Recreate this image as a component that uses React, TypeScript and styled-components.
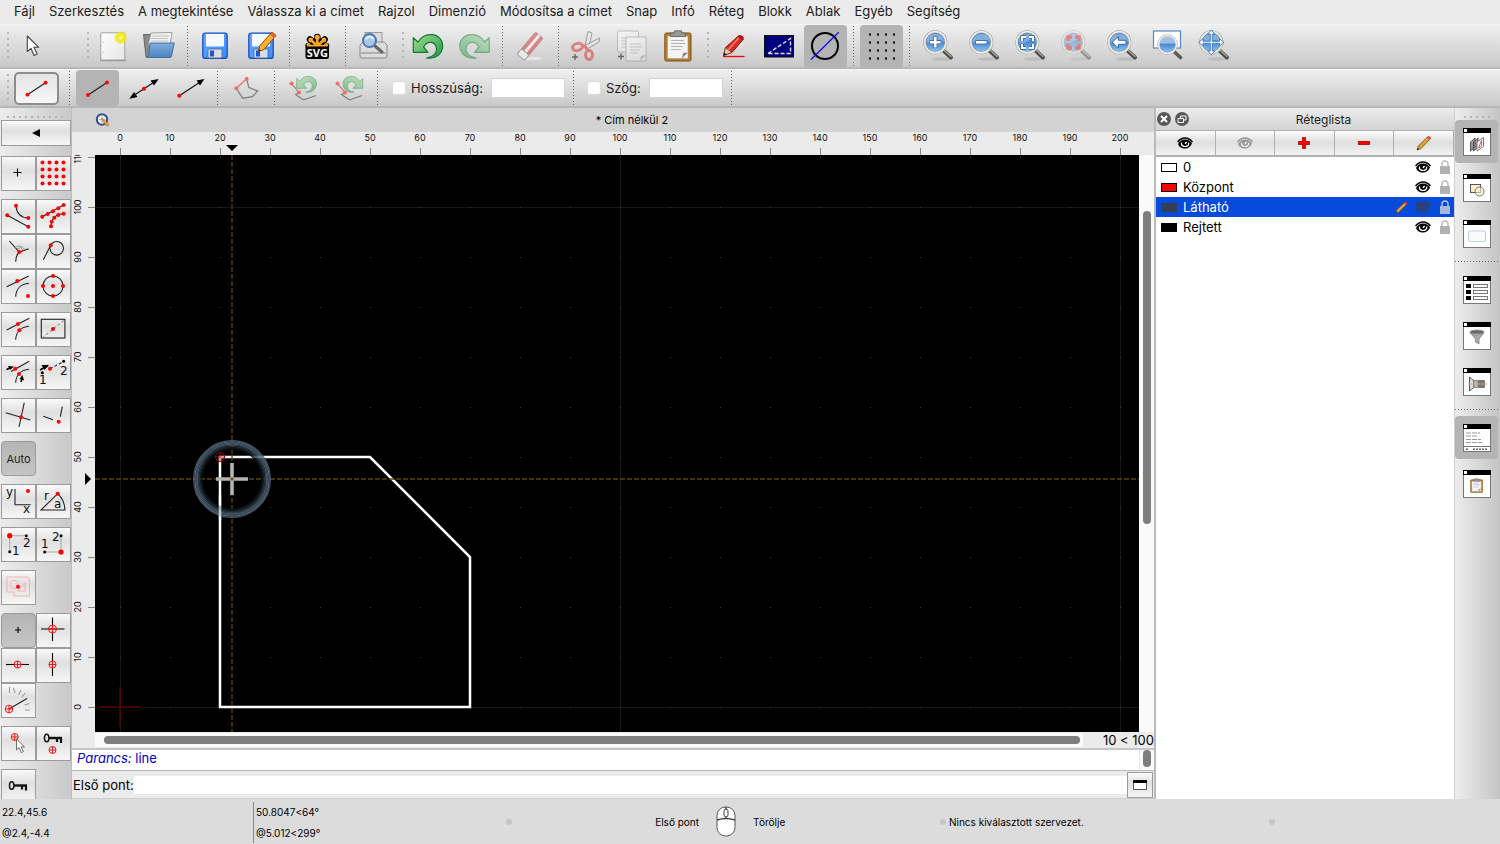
import React from 'react';
import styled, { createGlobalStyle, css } from 'styled-components';

const GlobalStyle = createGlobalStyle`
  * { box-sizing: border-box; }
  body { margin: 0; background: #ebebeb; font-family: Inter, "Liberation Sans", sans-serif; color: #1c1c1c; }
  button, input { font: inherit; color: inherit; }
  button { padding: 0; border: 0; background: none; display: flex; align-items: center; justify-content: center; }
  svg { display: block; }
`;

/* ---------- shell ---------- */

const Shell = styled.div`
  display: flex;
  flex-direction: column;
  height: 100vh;
  overflow: hidden;
`;

const MenuBar = styled.nav`
  display: flex;
  flex: none;
  height: 24px;
  padding-left: 7px;
  background: #ebebeb;
`;

const MenuItem = styled.button`
  height: 22px;
  padding: 0 7px;
  font-size: 13px;
  white-space: nowrap;
`;

const ToolBar = styled.div<{ $height: number }>`
  display: flex;
  flex: none;
  align-items: center;
  gap: 3px;
  height: ${(p) => p.$height}px;
  padding-left: 3px;
  background: linear-gradient(#efefef, #c9c9c9);
  border-top: 1px solid #f5f5f5;
  border-bottom: 2px solid #b7b7b7;
  font-size: 13px;
`;

const Handle = styled.span<{ $before?: number }>`
  width: 6px;
  height: 28px;
  margin-left: ${(p) => p.$before ?? 0}px;
  background: repeating-linear-gradient(#b4b4b4 0 2px, transparent 2px 6px) right / 2px 100% no-repeat;
`;

const Divider = styled.span<{ $after?: number }>`
  align-self: stretch;
  width: 1px;
  margin: 1px ${(p) => p.$after ?? 3}px 1px 3px;
  background: repeating-linear-gradient(#6b6b6b 0 1px, transparent 1px 3px);
`;

const ToolButton = styled.button<{ $active?: boolean; $height?: number }>`
  width: 43px;
  height: ${(p) => p.$height ?? 43}px;
  border-radius: 4px;
  background: ${(p) => (p.$active ? '#b4b4b4' : 'transparent')};
`;

const CurrentTool = styled.button`
  width: 45px;
  height: 33px;
  margin: 0 4px 0 2px;
  border: 2px solid #8d8d8d;
  border-radius: 5px;
  background: linear-gradient(#e4e4e4, #f6f6f6);
`;

const Field = styled.div`
  display: flex;
  align-items: center;
  padding: 0 2px 0 7px;
`;

const Check = styled.input`
  appearance: none;
  width: 14px;
  height: 14px;
  margin: 0 5px 0 0;
  border: 1px solid #dcdcdc;
  border-radius: 3px;
  background: #fff;
`;

const FieldLabel = styled.label`
  margin-right: 8px;
  font-size: 13px;
  white-space: nowrap;
`;

const NumberBox = styled.input`
  width: 74px;
  height: 20px;
  padding: 0 4px;
  border: 1px solid #d4d4d4;
  border-radius: 0;
  background: #fff;
`;

const Workspace = styled.main`
  display: grid;
  flex: 1;
  grid-template-columns: 72px minmax(0, 1fr) 301px 45px;
  grid-template-rows: minmax(0, 1fr);
  min-height: 0;
`;

/* ---------- snap tools ---------- */

const SnapPanel = styled.aside`
  display: flex;
  flex-direction: column;
  gap: 8px;
  min-height: 0;
  padding: 8px 0 0 1px;
  overflow: hidden;
  background: linear-gradient(90deg, #ededed, #c9c9c9);
  border-right: 1px solid #bdbdbd;
`;

const DotRow = styled.span<{ $width: number }>`
  flex: none;
  align-self: center;
  width: ${(p) => p.$width}px;
  height: 2px;
  background: repeating-linear-gradient(90deg, #b4b4b4 0 2px, transparent 2px 6px);
`;

const raised = css`
  border: 1px solid #9b9b9b;
  background: linear-gradient(#fafafa, #e0e0e0 40%, #f6f6f6);
`;

const BackButton = styled.button`
  ${raised}
  flex: none;
  width: 70px;
  height: 26px;
  margin: -6px 0 2px;
`;

const SnapGroup = styled.div`
  display: grid;
  flex: none;
  grid-template-columns: 35px 35px;
  grid-auto-rows: 35px;
`;

const SnapButton = styled.button<{ $pressed?: boolean }>`
  ${raised}
  font-size: 11px;
  ${(p) => p.$pressed && css`
    border-radius: 4px;
    background: linear-gradient(#b4b4b4, #c6c6c6);
  `}
`;

/* ---------- document ---------- */

const Center = styled.section`
  display: flex;
  flex-direction: column;
  min-width: 0;
  min-height: 0;
`;

const DocTitle = styled.div`
  display: flex;
  flex: none;
  align-items: center;
  height: 24px;
  padding-left: 23px;
  background: #d3d3d3;
  font-size: 11px;
`;

const DocName = styled.span`
  flex: 1;
  text-align: center;
  color: #000;
`;

const DrawArea = styled.div`
  display: grid;
  flex: 1;
  grid-template-columns: 23px minmax(0, 1fr) 15px;
  grid-template-rows: 23px minmax(0, 1fr) 16px;
  min-height: 0;
  background: #ebebeb;
`;

const Ruler = styled.svg`
  width: 100%;
  height: 100%;
  font-size: 9px;
  fill: #111;
`;

const TopRuler = styled(Ruler)`
  grid-column: 1 / 4;
`;

const Canvas = styled.svg`
  width: 100%;
  height: 100%;
  background: #000;
`;

const VerticalScroll = styled.div`
  padding: 56px 4px 0;
  background: #fafafa;
`;

const Thumb = styled.div<{ $size: string }>`
  width: 8px;
  height: ${(p) => p.$size};
  border-radius: 4px;
  background: #7e7e7e;
`;

const ScrollRow = styled.div`
  display: flex;
  grid-column: 2 / 4;
  align-items: center;
  font-size: 13px;
  white-space: nowrap;
  color: #000;
`;

const HorizontalScroll = styled.div`
  flex: 1;
  height: 14px;
  margin-right: 20px;
  padding: 3px 3px 0 9px;
  background: #fafafa;
`;

const HorizontalThumb = styled.div`
  height: 8px;
  border-radius: 4px;
  background: #7e7e7e;
`;

const History = styled.div`
  display: flex;
  flex: none;
  justify-content: space-between;
  height: 23px;
  padding-left: 5px;
  border-top: 2px solid #c6c6c6;
  border-bottom: 1px solid #b9b9b9;
  background: #fff;
  color: #0000c0;
  font-size: 13px;
  line-height: 16px;
`;

const HistoryScroll = styled.div`
  width: 15px;
  padding: 0 3px;
  border-left: 1px solid #e6e6e6;
  background: #fafafa;
`;

const CommandLine = styled.div`
  display: flex;
  flex: none;
  align-items: center;
  height: 28px;
  padding: 0 1px;
  border-bottom: 1px solid #cfcfcf;
  background: #ebebeb;
  color: #000;
  font-size: 13px;
`;

const CommandInput = styled.input`
  flex: 1;
  min-width: 0;
  height: 18px;
  padding: 0 4px;
  border: 0;
  background: #fff;
`;

const CommandButton = styled.button`
  ${raised}
  width: 26px;
  height: 26px;
`;

/* ---------- layer list ---------- */

const LayerDock = styled.section`
  display: flex;
  flex-direction: column;
  min-height: 0;
  border-left: 2px solid #b9b9b9;
  border-right: 1px solid #cfcfcf;
  background: #fff;
`;

const DockTitle = styled.header`
  display: flex;
  flex: none;
  align-items: center;
  gap: 4px;
  height: 22px;
  padding-left: 1px;
  background: linear-gradient(#ececec, #d3d3d3);
`;

const DockName = styled.h2`
  flex: 1;
  margin: 0;
  font-size: 12px;
  font-weight: 400;
  text-align: center;
`;

const LayerActions = styled.div`
  display: grid;
  flex: none;
  grid-template-columns: repeat(5, 1fr);
  height: 27px;
  border-bottom: 1px solid #b0b0b0;
`;

const LayerAction = styled.button`
  border: 1px solid #b0b0b0;
  border-left-width: 0;
  background: linear-gradient(#fbfbfb, #dfdfdf 48%, #f2f2f2);
`;

const LayerTable = styled.table`
  width: 100%;
  border-collapse: collapse;
  font-size: 13px;
`;

const LayerRow = styled.tr<{ $selected?: boolean }>`
  height: 20px;
  background: ${(p) => (p.$selected ? '#084adb' : '#fff')};
  color: ${(p) => (p.$selected ? '#fff' : '#000')};
`;

const LayerCell = styled.td<{ $width?: number }>`
  width: ${(p) => (p.$width ? `${p.$width}px` : 'auto')};
  height: 20px;
  padding: 0;
  line-height: 20px;
`;

const Swatch = styled.span<{ $color: string; $edge: string }>`
  display: block;
  width: 16px;
  height: 9px;
  margin-left: 5px;
  border: 1px solid ${(p) => p.$edge};
  background: ${(p) => p.$color};
`;

/* ---------- right dock bar ---------- */

const DockBar = styled.aside`
  display: flex;
  flex-direction: column;
  align-items: center;
  gap: 3px;
  padding: 8px 2px 0 0;
  background: linear-gradient(90deg, #ededed, #c4c4c4);
`;

const DockButton = styled(ToolButton)`
  flex: none;
  &:first-of-type { margin-top: -1px; }
`;

const DockDivider = styled.span`
  flex: none;
  align-self: stretch;
  height: 1px;
  margin: 3px 0;
  background: repeating-linear-gradient(90deg, #6b6b6b 0 1px, transparent 1px 3px);
`;

/* ---------- status bar ---------- */

const StatusBar = styled.footer`
  display: grid;
  flex: none;
  grid-template-columns: 253px 253px minmax(0, 434px) minmax(0, 1fr);
  height: 45px;
  background: #dcdcdc;
  color: #000;
  font-size: 10px;
`;

const Coordinates = styled.div<{ $ruled?: boolean }>`
  display: flex;
  flex-direction: column;
  justify-content: space-between;
  margin: 3px 0 1px;
  padding: 4px 2px;
  line-height: 12px;
  border-left: ${(p) => (p.$ruled ? '1px solid #8a8a8a' : '0')};
`;

const StatusCell = styled.div`
  display: flex;
  align-items: center;
`;

const MouseHints = styled.div`
  display: grid;
  flex: 1;
  grid-template-columns: 184px 54px 1fr;
  align-items: center;
`;

const HintLeft = styled.span`
  text-align: right;
`;

const MouseCell = styled.span`
  display: flex;
  justify-content: center;
`;

const Bullet = styled.span`
  width: 6px;
  height: 6px;
  margin-right: 3px;
  border-radius: 3px;
  background: #c6c6c6;
`;

const Selection = styled.span`
  flex: 0 0 320px;
`;

/* ---------- icons ---------- */

const Big = ({ children, faded }: { children: React.ReactNode; faded?: boolean }) => (
  <svg width="43" height="43" viewBox="0 0 43 43" opacity={faded ? 0.5 : 1} aria-hidden="true">{children}</svg>
);

const Defs = () => (
  <svg width="0" height="0" aria-hidden="true">
    <defs>
      <linearGradient id="lens" x2="0" y2="1"><stop stopColor="#5a8cc8" /><stop offset=".5" stopColor="#4b8bd4" /><stop offset="1" stopColor="#92c8f8" /></linearGradient>
      <linearGradient id="green" x2="1" y2="1"><stop stopColor="#a5dc8c" /><stop offset="1" stopColor="#1e9a4a" /></linearGradient>
      <linearGradient id="folder" x2="0" y2="1"><stop stopColor="#7fb0de" /><stop offset="1" stopColor="#4a84c0" /></linearGradient>
      <linearGradient id="disk" x2="1" y2="1"><stop stopColor="#66aaff" /><stop offset="1" stopColor="#3a8cf8" /></linearGradient>
      <linearGradient id="paper" x2="1" y2="1"><stop stopColor="#fff" /><stop offset="1" stopColor="#e6e6e6" /></linearGradient>
      <radialGradient id="glow"><stop stopColor="#fffde0" /><stop offset=".35" stopColor="#f6ee20" /><stop offset=".7" stopColor="#f0e610" stopOpacity=".8" /><stop offset="1" stopColor="#f4ea40" stopOpacity="0" /></radialGradient>
    </defs>
  </svg>
);

const Cursor = ({ x = 0, y = 0, s = 1 }: { x?: number; y?: number; s?: number }) => (
  <path transform={`translate(${x} ${y}) scale(${s})`} d="M0 0V15.5L3.6 12.3L6.8 19.4L9.8 18L6.6 11.3H11.4Z" fill="#fff" stroke="#444" strokeWidth="1.1" strokeLinejoin="round" />
);

const DiskShape = () => (
  <>
    <rect x="8.8" y="8" width="24.4" height="25.4" rx="2.5" fill="url(#disk)" stroke="#1546b8" strokeWidth="1.2" />
    <path d="M12 9H30V20.5Q30 21.5 29 21.5H13Q12 21.5 12 20.5Z" fill="#f4f9ff" />
    <rect x="14" y="24" width="14" height="9" rx="1" fill="#d8dde4" stroke="#4464a8" strokeWidth=".8" />
    <rect x="16" y="25.5" width="4" height="6" fill="#2255c8" />
  </>
);

const Loupe = ({ children, faded }: { children?: React.ReactNode; faded?: boolean }) => (
  <Big faded={faded}>
    <ellipse cx="26" cy="34" rx="10" ry="1.8" fill="#999" opacity=".35" />
    <path d="M28 26L35 32.500" stroke="#4c4c48" strokeWidth="4" strokeLinecap="round" />
    <path d="M28 25L35 31.500" stroke="#a6a69e" strokeWidth="1.4" strokeLinecap="round" />
    <circle cx="19.3" cy="17.3" r="10.6" fill="url(#lens)" stroke="#9a9c94" strokeWidth="2.8" />
    <circle cx="19.3" cy="17.3" r="10.6" fill="none" stroke="#ecece6" strokeWidth="1.7" />
    <path d="M10.6 17Q11 9.2 19.3 9T28 17Q24 13.5 19 16.5T10.6 17Z" fill="#b6cfee" opacity=".5" />
    {children}
  </Big>
);

const Corners = ({ color }: { color: string }) => (
  <>
    <path d="M14 16V12H18M21 12H25V16M25 19V23H21M18 23H14V19" fill="none" stroke={color === '#fff' ? '#2f5f9a' : color} strokeWidth="3.4" />
    <path d="M14 16V12H18M21 12H25V16M25 19V23H21M18 23H14V19" fill="none" stroke={color} strokeWidth="2" />
  </>
);

const TurnArrow = () => (
  <path d="M6.3 12.7L11 17C18 5.500 35 8 35.700 20C36 29 28 34.500 19.500 33C27 32 31 27 29 21.500C27 16 20 16 16.500 22L21 27.300H6.300Z" fill="url(#green)" stroke="#127a35" strokeWidth="1.2" strokeLinejoin="round" />
);

const Board = () => (
  <>
    <rect x="7.8" y="8" width="26.2" height="28" rx="1.5" fill="#b87d2c" stroke="#7c5010" />
    <path d="M10.500 11H31V33.500H10.500Z" fill="#f4f4f4" stroke="#999" strokeWidth=".6" />
    <path d="M25 33.500L26 28L31 27.500Z" fill="#888" />
    <path d="M14 15.500H27M14 18.500H28M14 21.500H26M14 24.500H24" stroke="#b4b4b4" strokeWidth="1" />
    <path d="M13.500 11.500V8H17.500V5.800H24.500V8H28.500V11.500Z" fill="#9a9a94" stroke="#5a5a55" strokeWidth=".8" />
  </>
);

const Mark = ({ x, y }: { x: number; y: number }) => (
  <path d={`M${x - 3} ${y}H${x + 3}M${x} ${y - 3}V${y + 3}`} stroke="#000" strokeWidth="1.4" />
);

const Page = ({ x, y, w, h }: { x: number; y: number; w: number; h: number }) => (
  <g transform={`translate(${x} ${y})`}>
    <rect width={w} height={h} rx="1" fill="url(#paper)" stroke="#888" strokeWidth=".9" />
    <path d={`M4 7H${w - 5}M4 10H${w - 4}M4 13H${w - 6}M4 16H${w - 8}`} stroke="#aaa" />
    <path d={`M${w - 6} ${h}L${w - 5} ${h - 5}L${w} ${h - 6}Z`} fill="#999" />
  </g>
);

const icons: Record<string, React.ReactNode> = {
  cursor: <Big><Cursor x={15.3} y={11} /></Big>,
  fresh: <Big><path d="M8 35.500H34" stroke="#999" strokeWidth="1.500" /><rect x="8.800" y="7.800" width="24" height="27.200" rx="1" fill="url(#paper)" stroke="#a2a2a0" /><circle cx="11.500" cy="17.500" r=".8" fill="#ccc" /><circle cx="11.500" cy="27.500" r=".8" fill="#ccc" /><circle cx="28.700" cy="12.700" r="7" fill="url(#glow)" /></Big>,
  open: <Big>
    <path d="M5.500 9.500H14V12H32V32H8Z" fill="#8a8a88" stroke="#555" strokeWidth=".8" />
    <path d="M13 8L34 7.500L32 20H10Z" fill="#f2f2f2" stroke="#888" strokeWidth=".8" />
    <path d="M14 11H31M13 13.500H30M13 16H30" stroke="#c0c0c0" />
    <path d="M12 18H36.300L33.500 31Q33.300 32.500 31.500 32.500H8.500Q10.500 31.500 10.700 29Z" fill="url(#folder)" stroke="#3b6a9e" strokeWidth=".9" />
  </Big>,
  save: <Big><DiskShape /></Big>,
  saveAs: <Big><DiskShape /><path d="M32 7L36 10.500L24 24.500L18.500 26.500L19.500 21Z" fill="#f8b030" stroke="#8a4a10" /><path d="M32 7L36 10.500L34 13L30 9.500Z" fill="#e86030" /><path d="M18.500 26.500L19 24L20.800 25.600Z" fill="#222" /></Big>,
  svgExport: <Big>
    <g stroke="#000" strokeWidth="6.500" strokeLinecap="round"><path d="M21.300 21V12M21.300 21L14 14.500M21.300 21L28.600 14.500M21.300 21H12.500M21.300 21H30" /></g>
    <g stroke="#f9a72c" strokeWidth="2.600" strokeLinecap="round"><path d="M21.300 21V12.500M21.300 21L15 15M21.300 21L27.600 15M21.300 21H12.700M21.300 21H29.900" /></g>
    <g fill="#f9a72c"><circle cx="21.300" cy="12.300" r="2.500" /><circle cx="14.700" cy="15" r="2.400" /><circle cx="27.900" cy="15" r="2.400" /><circle cx="12.500" cy="20" r="2" /><circle cx="30.100" cy="20" r="2" /></g>
    <rect x="9.500" y="21.500" width="23.500" height="12.500" rx="2.500" />
    <text x="21.300" y="32" fontSize="11" fontWeight="700" fontFamily="Open Sans, sans-serif" textAnchor="middle" fill="#fff">SVG</text>
  </Big>,
  preview: <Big>
    <rect x="13" y="7.500" width="17" height="14" fill="#ddd" stroke="#999" />
    <path d="M8 20L11 17H32L35 20V31Q35 33 33 33H10Q8 33 8 31Z" fill="#dcdcda" stroke="#8a8a88" />
    <path d="M9 28H34" stroke="#b0b0ae" strokeWidth="2" />
    <path d="M23 21L30 27" stroke="#666" strokeWidth="3" strokeLinecap="round" />
    <circle cx="17.500" cy="15.500" r="6.500" fill="#a9c9ea" stroke="#4c79ae" strokeWidth="2" /><path d="M13.500 14Q17.500 9.500 21.500 14" fill="none" stroke="#e8f3ff" strokeWidth="2" />
  </Big>,
  undo: <Big><TurnArrow /></Big>,
  redo: <Big faded><g transform="translate(42.500 0) scale(-1 1)"><TurnArrow /></g></Big>,
  erase: <Big faded>
    <ellipse cx="22" cy="33.500" rx="11" ry="1.800" fill="#fff" opacity=".9" />
    <g transform="translate(21 20.500) rotate(-50)">
      <rect x="-15" y="-4.500" width="29" height="10" rx="1.500" fill="#d83030" stroke="#844" strokeWidth=".7" />
      <rect x="-8" y="-1" width="22" height="3" fill="#fff" />
      <rect x="-15" y="-4.500" width="7" height="10" rx="2" fill="#fff" stroke="#777" strokeWidth="1" />
    </g>
  </Big>,
  cut: <Big faded>
    <path d="M23 6.500L20 21L23.500 23L27 8Z" fill="#eee" stroke="#555" />
    <path d="M34.500 13L20 20.500L22 24L34 17Z" fill="#eee" stroke="#555" />
    <g fill="none" stroke="#e02828" strokeWidth="3"><ellipse cx="12.500" cy="22" rx="5" ry="3.500" transform="rotate(-15 12.500 22)" /><ellipse cx="24" cy="30" rx="3.500" ry="4.500" /><path d="M17 21Q21 20 22.500 26" /></g>
    <Mark x={10} y={32} />
  </Big>,
  copy: <Big faded><Page x={6.5} y={6} w={21} h={21} /><Page x={15} y={12} w={20} h={24} /><Mark x={10} y={31.5} /></Big>,
  paste: <Big><Board /></Big>,
  pen: <Big>
    <path d="M11 31.500H32.500" stroke="#f00" strokeWidth="1.300" />
    <path d="M27 10.500L31.500 14L20 27.500L11.500 30.500L13.500 22.500Z" fill="#dc2a20" stroke="#7a1008" strokeWidth=".9" />
    <path d="M13.500 22.500L19.800 27.500L11.500 30.500Z" fill="#e8c496" stroke="#543" strokeWidth=".7" /><path d="M11.500 30.500L12.200 27.500L14.500 29.400Z" fill="#111" />
    <path d="M27.500 12L16.500 24.500" stroke="#ff8070" strokeWidth="1.500" /><path d="M25.500 11.800L27.500 10Q31.500 10 31.800 13.500L30 15.500Z" fill="#b01c14" />
  </Big>,
  draft: <Big><rect x="6.500" y="10.500" width="29" height="21.500" fill="#00007e" stroke="#111" /><path d="M10 28.500L32.500 13.500V28.500Z" fill="none" stroke="#dde" strokeWidth="1.400" strokeDasharray="4 2" /></Big>,
  circle: <Big><circle cx="21" cy="21" r="13" fill="none" stroke="#000" strokeWidth="2" /><path d="M7 34.500L34.700 7.300" stroke="#1010f0" strokeWidth="1.300" /></Big>,
  grid: <Big>{[0, 1, 2, 3].map((r) => [0, 1, 2, 3].map((c) => <rect key={`${r}${c}`} x={9 + c * 8} y={8.5 + r * 8} width="2" height="2" />))}</Big>,
  zoomIn: <Loupe><path d="M19.300 11.500V23M13.500 17.300H25" stroke="#2f5f9a" strokeWidth="4" /><path d="M19.300 12V22.600M14 17.300H24.600" stroke="#fff" strokeWidth="2.600" /></Loupe>,
  zoomOut: <Loupe><path d="M13.300 17.300H25.300" stroke="#2f5f9a" strokeWidth="4" /><path d="M14 17.300H24.600" stroke="#fff" strokeWidth="2.600" /></Loupe>,
  zoomAuto: <Loupe><Corners color="#fff" /></Loupe>,
  zoomRed: <Loupe faded><Corners color="#e82020" /></Loupe>,
  zoomBack: <Loupe><path d="M12 17.300L18.500 11.500V15.300H26V19.300H18.500V23Z" fill="#fff" stroke="#2f5f9a" strokeWidth=".9" /></Loupe>,
  zoomWindow: <Big>
    <path d="M28.500 27L34.500 32.500" stroke="#5c5c58" strokeWidth="3.600" strokeLinecap="round" />
    <rect x="7.500" y="6" width="27" height="17" fill="#fff" stroke="#5a86c4" strokeWidth="1.200" />
    <circle cx="21.500" cy="19.500" r="9" fill="url(#lens)" stroke="#aaa" strokeWidth="2.600" /><circle cx="21.500" cy="19.500" r="9" fill="none" stroke="#eee" strokeWidth="1.500" /><path d="M14 18.500A7.500 7.500 0 0 1 29 18.500Z" fill="#c2d5ea" opacity=".7" />
  </Big>,
  zoomPan: <Loupe>
    <g fill="#fff" stroke="#3a76b8" strokeWidth=".9"><path d="M18.300 9H15.800L19.300 5L22.800 9H20.300V16.300H27.600V13.800L32 17.300L27.600 20.800V18.300H20.300V26H22.800L19.300 30L15.800 26H18.300V18.300H11V20.800L6.600 17.300L11 13.800V16.300H18.300Z" /></g>
  </Loupe>,
};

const Small = ({ children, faded }: { children: React.ReactNode; faded?: boolean }) => (
  <svg width="43" height="37" viewBox="0 0 43 37" opacity={faded ? 0.5 : 1} aria-hidden="true">{children}</svg>
);

const D = ({ x, y, r = 2 }: { x: number; y: number; r?: number }) => <circle cx={x} cy={y} r={r} fill="#f00" />;

const lineIcon = <><path d="M12 25L31 12.500" stroke="#222" strokeWidth="1.200" /><D x={12} y={25} /><D x={31} y={12.5} /></>;
const openPolyline = <path d="M9.500 13.500L17 22.500L13.500 24.500L21.500 30L34 25.500" fill="none" stroke="#222" strokeWidth="1.100" />;

const Snap = ({ children }: { children: React.ReactNode }) => (
  <svg width="33" height="33" viewBox="1 1 33 33" fill="none" stroke="#222" strokeWidth="1.100" aria-hidden="true">{children}</svg>
);

const S = ({ x, y, r = 2, dark }: { x: number; y: number; r?: number; dark?: boolean }) => (
  <circle cx={x} cy={y} r={r} fill={dark ? '#000' : '#f00'} stroke="none" />
);

const Label = ({ x, y, children }: { x: number; y: number; children: string }) => (
  <text x={x} y={y} fontSize="12" fontFamily="DejaVu Sans, sans-serif" fill="#111" stroke="none">{children}</text>
);

const Target = ({ x, y, r = 3.5 }: { x: number; y: number; r?: number }) => (
  <g stroke="#f01818" strokeWidth="1"><circle cx={x} cy={y} r={r} /><path d={`M${x - r} ${y}H${x + r}M${x} ${y - r}V${y + r}`} /></g>
);

const KeyShape = ({ y }: { y: number }) => (
  <g stroke="#111"><ellipse cx="10.700" cy={y} rx="2.200" ry="3.800" strokeWidth="1.500" /><path d={`M13 ${y}H26`} strokeWidth="2.400" /><path d={`M21 ${y}V${y + 4}M25 ${y}V${y + 5}`} strokeWidth="2.200" /></g>
);

const curve = 'M14.700 27.700C15 20 20 15 28 14.300';

type SnapItem = { label: string; art: React.ReactNode; pressed?: boolean };
const snapGroups: SnapItem[][] = [
  [
    { label: 'Szabad', art: <Snap><path d="M12.500 16.500H20.500M16.500 12.500V20.500" stroke="#000" /></Snap> },
    { label: 'Rács', art: <Snap>{[0, 1, 2, 3].map((r) => [0, 1, 2, 3].map((c) => <S key={`${r}${c}`} x={6.5 + c * 7} y={6.5 + r * 7} />))}</Snap> },
  ],
  [
    { label: 'Végpontok', art: <Snap><path d="M15 6.700C15.500 14 19 18.500 27.300 19M6.300 16.300L27.300 27.700" /><S x={15} y={6.7} /><S x={27.3} y={19} /><S x={6.3} y={16.3} /><S x={27.3} y={27.7} /></Snap> },
    { label: 'Entitáson', art: <Snap><path d="M6.300 17.700L27.700 6M15 27.300Q16 15 27.700 14.700" /><S x={6.3} y={17.7} /><S x={11.7} y={15} /><S x={17} y={12.3} /><S x={22.3} y={9.3} /><S x={27.7} y={6} /><S x={15} y={27.3} /><S x={15.7} y={22.7} /><S x={18.3} y={18.7} /><S x={22.3} y={16} /><S x={27.7} y={14.7} /></Snap> },
    { label: 'Merőleges', art: <Snap><path d="M8.300 7L18.300 18L27.700 14.700M18.300 18Q14.500 22 14.700 27.700" /><path d="M14 14.500C15 11 21 11 24 16M16 15L19.500 13.500L22 16" stroke="#888" strokeWidth=".9" /><S x={18.3} y={18} /></Snap> },
    { label: 'Érintő', art: <Snap><circle cx="20.700" cy="14.300" r="6.800" /><path d="M7.300 25.700L14.700 11.300" /><S x={14.7} y={11.3} /></Snap> },
    { label: 'Referencia', art: <Snap><path d="M5.700 17.700L27.700 7" /><path d={curve} /><S x={16.3} y={12} /><S x={27} y={27} /></Snap> },
    { label: 'Középpont', art: <Snap><circle cx="17" cy="17" r="10" /><S x={17} y={17} /><S x={17} y={7} /><S x={17} y={27} /><S x={7} y={17} /><S x={27} y={17} /></Snap> },
  ],
  [
    { label: 'Felezőpont', art: <Snap><path d="M5.700 18L28.300 6.300" /><path d={curve} /><S x={17} y={12} /><S x={18.3} y={18.3} /></Snap> },
    { label: 'Entitás közepe', art: <Snap><rect x="5.300" y="7.300" width="23.600" height="18.700" /><path d="M6 26L29 7.500" stroke="#999" strokeDasharray="3 2" /><S x={17} y={17} /></Snap> },
  ],
  [
    { label: 'Távolság', art: <Snap><path d="M10 16.500L28.300 6.300" /><path d={curve} /><path d="M5.500 14.500L10 12.500M20 27L21 23" stroke="#000" strokeWidth="1.600" /><path d="M7 11L13 11.500L9 15ZM18.500 24L21.500 20L23 25.500Z" fill="#000" stroke="none" /><S x={14.3} y={13.7} /><S x={18} y={19} /></Snap> },
    { label: 'Két távolság', art: <Snap><path d="M14 13.700L27.700 6.500" strokeDasharray="3 2" /><path d="M4 15L12 10.500" stroke="#000" strokeWidth="1.600" /><path d="M5.500 10L13 10L8.500 15Z" fill="#000" stroke="none" /><S x={6.3} y={17.7} r={1.5} dark /><S x={27.7} y={6.3} r={1.5} dark /><S x={14} y={13.7} /><Label x={3} y={29}>1</Label><Label x={24} y={20}>2</Label></Snap> },
  ],
  [
    { label: 'Metszéspont', art: <Snap><path d="M4.700 14.700L29.300 22M23.300 4.700L18 29" /><S x={20} y={19.3} /></Snap> },
    { label: 'Kézi metszéspont', art: <Snap><path d="M7.300 18.300L17 21.700M26.300 8.700L24.300 18.700" /><S x={22.7} y={23.7} /></Snap> },
  ],
  [{ label: 'Auto', art: 'Auto', pressed: true }],
  [
    { label: 'Derékszögű koordináta', art: <Snap><path d="M14 5V20.700H29.700" /><S x={27} y={7} /><Label x={5} y={12}>y</Label><Label x={22} y={29}>x</Label></Snap> },
    { label: 'Poláris koordináta', art: <Snap><path d="M5 26L21.700 9.700Q28.500 16 29 26Z" /><S x={21.7} y={9.7} /><Label x={8} y={16}>r</Label><Label x={18} y={24}>a</Label></Snap> },
  ],
  [
    { label: 'X/Y pont', art: <Snap><path d="M25.300 8.700H8.700V24.700" stroke="#aaa" /><S x={8.7} y={8.7} r={2.6} /><S x={25.3} y={8.7} r={1.5} dark /><S x={8.7} y={24.7} r={1.5} dark /><Label x={11} y={28}>1</Label><Label x={22} y={20}>2</Label></Snap> },
    { label: 'Y/X pont', art: <Snap><path d="M8.700 25H25V8.700" stroke="#aaa" /><S x={25} y={25} r={2.6} /><S x={25} y={8.7} r={1.5} dark /><S x={8.7} y={25} r={1.5} dark /><Label x={5} y={21}>1</Label><Label x={16} y={14}>2</Label></Snap> },
  ],
  [{ label: 'Kijelölés középpontja', art: <Snap><g stroke="#f5b4b4"><path d="M6 7H26Q28.500 8 28.500 11V26H13V22H6Z" /><circle cx="13" cy="14.500" r="4" /><path d="M17 21H24V13Z" /></g><S x={17} y={16.7} /></Snap> }],
  [
    { label: 'Nincs korlátozás', pressed: true, art: <Snap><path d="M14 17H20M17 14V20" stroke="#000" /></Snap> },
    { label: 'Merőleges korlát', art: <Snap><path d="M5 16H28.500M16.500 4.500V28" stroke="#000" /><Target x={16.5} y={16} r={4} /></Snap> },
    { label: 'Vízszintes korlát', art: <Snap><path d="M5 16.500H28" stroke="#000" /><Target x={16.5} y={16.5} /></Snap> },
    { label: 'Függőleges korlát', art: <Snap><path d="M16.500 5V28" stroke="#000" /><Target x={16.5} y={16.5} /></Snap> },
    { label: 'Szögkorlát', art: <Snap><path d="M8 26L26 15.500" /><path d="M8.500 4V10M14 10L12.500 5M17.500 12L20 7M21 14L24 10M23.500 22L28.500 20.500M24 27H29" stroke="#999" /><Target x={8} y={26} r={3.8} /></Snap> },
  ],
  [
    { label: 'Relatív nullpont', art: <Snap><Target x={13.7} y={11} r={3.5} /><Cursor x={15.5} y={13} s={0.7} /></Snap> },
    { label: 'Relatív nullpont zárolása', art: <Snap><KeyShape y={12} /><Target x={16.5} y={24} /></Snap> },
  ],
  [{ label: 'Zárolás', art: <Snap><KeyShape y={16.5} /></Snap> }],
];

const Eye = ({ color = '#000', hole = '#fff' }: { color?: string; hole?: string }) => (
  <svg width="16" height="13" viewBox="0 0 16 13" aria-hidden="true">
    <path d="M1 7C3 3.500 5 2.500 8 2.500S13.500 4 15 6.500C13.500 10 11 11.500 8 11.500S2.500 10.500 1 7Z" fill={color} />
    <path d="M.5 5Q4 1 8 1T15.500 5" fill="none" stroke={color} strokeWidth="1.500" />
    <path d="M4.500 5.500Q4 9.500 8 9.500T11.800 5.500" fill="none" stroke={hole} strokeWidth="1.200" /><path d="M8 6.800L9.600 5" stroke={hole} strokeWidth="1.400" />
  </svg>
);

const Lock = ({ light }: { light?: boolean }) => (
  <svg width="10" height="14" viewBox="0 0 10 14" aria-hidden="true">
    <path d="M2 7V4Q2 1 5 1T8 4V7" fill="none" stroke={light ? '#b9c4de' : '#bdbdbd'} strokeWidth="1.400" /><rect y="6" width="10" height="8" fill={light ? '#a9b9dc' : '#b2b2b2'} />
  </svg>
);

const Pencil = ({ size }: { size: number }) => (
  <svg width={size} height={size} viewBox="0 0 16 16" aria-hidden="true">
    <path d="M1 15L2.200 11L11.500 2L14 4.200L5 13.500Z" fill="#dba13c" stroke="#7a5410" strokeWidth=".8" /><path d="M11 2.500L12.500 1Q14.800 1.200 15 3.500L13.500 5Z" fill="#e84038" /><path d="M1 15L1.700 12.800L3.200 14.300Z" fill="#222" />
  </svg>
);

const Win = ({ children }: { children: React.ReactNode }) => (
  <svg width="28" height="28" viewBox="0 0 28 28" aria-hidden="true">
    <rect x=".5" y=".5" width="27" height="27" fill="#fff" stroke="#777" /><path d="M0 0H28V5H0Z" fill="#000" /><rect x="1" y="1" width="3" height="3" fill="#fff" />{children}
  </svg>
);

const Funnel = () => <><ellipse cx="14" cy="10" rx="7" ry="2" fill="#666" stroke="#999" /><path d="M7 10.500Q10 13 14 13T21 10.500L16 17V22L12.500 20V17Z" fill="#aaa" stroke="#777" strokeWidth=".7" /></>;

const docks: (null | { label: string; active?: boolean; art: React.ReactNode })[] = [
  { label: 'Réteglista', active: true, art: <><path d="M7.500 14L12 10V19L7.500 23ZM10.500 14L15 10V19L10.500 23Z" fill="#999" stroke="#555" /><path d="M14 14L20.500 9.500V18.500L14 23Z" fill="#fff" stroke="#777" /><path d="M15.500 20L18.500 12.500V18Z" fill="none" stroke="#e33" strokeWidth=".8" /></> },
  { label: 'Blokklista', art: <><rect x="7.500" y="10.500" width="10" height="8" fill="#fbf0cc" stroke="#555" /><circle cx="16.500" cy="17.500" r="4.500" fill="#fbf0cc" fillOpacity=".6" stroke="#777" /></> },
  { label: 'Nézetlista', art: <rect x="5.500" y="11" width="17" height="10.500" rx="1.500" fill="#fafafa" stroke="#c3cfe6" strokeWidth="1.200" /> },
  null,
  { label: 'Tulajdonságok', art: <>{[8, 14, 20].map((y) => <React.Fragment key={y}><rect x="3" y={y} width="5" height="4" /><rect x="10.500" y={y + 0.5} width="14" height="3" fill="#fff" stroke="#777" /></React.Fragment>)}</> },
  { label: 'Szűrő', art: <Funnel /> },
  { label: 'Könyvtár', art: <><path d="M6.500 9V23L11 19V13Z" fill="#ddd" stroke="#555" /><rect x="11" y="12.500" width="4" height="7" fill="#bbb" stroke="#777" strokeWidth=".7" /><rect x="15" y="12" width="7" height="8" rx="1" fill="#777" /><path d="M5 16H24" stroke="#e99" strokeWidth=".8" /></> },
  null,
  { label: 'Parancssor', active: true, art: <><path d="M3 9H17M3 12H14M3 15.500H18M3 18.500H19" stroke="#999" strokeWidth="1.200" strokeDasharray="5 1" /><path d="M1 22.500H27" stroke="#777" /><path d="M3 25.300H5M10 25.300H25" stroke="#666" strokeWidth="1.600" strokeDasharray="2 1" /></> },
  { label: 'Vágólap', art: <g transform="translate(4 6) scale(.46)"><Board /></g> },
];

/* ---------- data ---------- */

const menus = ['Fájl', 'Szerkesztés', 'A megtekintése', 'Válassza ki a címet', 'Rajzol', 'Dimenzió', 'Módosítsa a címet', 'Snap', 'Infó', 'Réteg', 'Blokk', 'Ablak', 'Egyéb', 'Segítség'];

type Tool = '|' | ':' | { id: string; label: string; active?: boolean };
const tools: Tool[] = [
  { id: 'fresh', label: 'Új' }, { id: 'open', label: 'Megnyitás' }, '|',
  { id: 'save', label: 'Mentés' }, { id: 'saveAs', label: 'Mentés másként' }, '|',
  { id: 'svgExport', label: 'SVG exportálás' }, '|', { id: 'preview', label: 'Nyomtatási kép' }, ':',
  { id: 'undo', label: 'Visszavonás' }, { id: 'redo', label: 'Ismét' }, '|',
  { id: 'erase', label: 'Törlés' }, '|',
  { id: 'cut', label: 'Kivágás' }, { id: 'copy', label: 'Másolás' }, { id: 'paste', label: 'Beillesztés' }, ':',
  { id: 'pen', label: 'Toll' }, { id: 'draft', label: 'Vázlat' }, { id: 'circle', label: 'Élsimítás', active: true }, '|',
  { id: 'grid', label: 'Rács megjelenítése', active: true }, '|',
  { id: 'zoomIn', label: 'Nagyítás' }, { id: 'zoomOut', label: 'Kicsinyítés' }, { id: 'zoomAuto', label: 'Automatikus nagyítás' }, { id: 'zoomRed', label: 'Kijelölés nagyítása' }, { id: 'zoomBack', label: 'Előző nézet' }, { id: 'zoomWindow', label: 'Ablak nagyítása' }, { id: 'zoomPan', label: 'Mozgatás' },
];

const layers = [
  { name: '0', color: '#fff', edge: '#000' },
  { name: 'Központ', color: '#f00', edge: '#000' },
  { name: 'Látható', color: '#333f52', edge: '#333f52', selected: true },
  { name: 'Rejtett', color: '#000', edge: '#000' },
];

const STEP = 50;
const range = (from: number, to: number) => Array.from({ length: to - from + 1 }, (_, i) => from + i);

const halo = [
  { r: 38.4, color: '#4a5b6c' }, { r: 37.2, color: '#5c7084' }, { r: 36, color: '#45576a' },
  { r: 34.8, color: '#506377' }, { r: 33.6, color: '#334250' }, { r: 32.4, color: '#2a3641' },
  { r: 31.2, color: '#161d24' }, { r: 30, color: '#0e1317' },
];

function Drawing() {
  return (
    <Canvas role="img" aria-label="Rajz">
      <defs>
        <pattern id="dots" width={STEP} height={STEP} patternUnits="userSpaceOnUse" x="25" y="2"><rect width="1" height="1" fill="#3c3c3c" /></pattern>
        <pattern id="major" width={STEP * 10} height={STEP * 10} patternUnits="userSpaceOnUse" x="25" y="52"><path d="M.5 0V500M0 .5H500" stroke="#181818" /></pattern>
      </defs>
      <rect width="100%" height="100%" fill="url(#major)" />
      <rect width="100%" height="100%" fill="url(#dots)" />
      <path d="M5 552H45M25 532V572" stroke="#5a0000" strokeWidth="1.500" />
      <path d="M125 302H275L375 402V552H125Z" fill="none" stroke="#fff" strokeWidth="2.500" />
      <g stroke="#57430a" strokeWidth="1.300" strokeDasharray="5 2"><line x1="0" x2="100%" y1="324" y2="324" /><line x1="137" x2="137" y1="0" y2="100%" /></g>
      <g fill="none" stroke="#b00000"><circle cx="125" cy="302" r="4.500" /><path d="M120 302H130M125 297V307" strokeWidth=".8" /></g>
      <g fill="none" opacity=".9">
        {halo.map((ring) => <circle key={ring.r} cx="137" cy="324" r={ring.r} stroke={ring.color} strokeWidth="1.300" />)}
      </g>
      <path d="M125 340V365" stroke="#fff" strokeWidth="2.500" opacity=".6" />
      <path d="M121 324H153M137 308V340" stroke="#b4b4b4" strokeWidth="3.600" /><rect x="135.500" y="322.500" width="3" height="3" fill="#6b5a20" />
    </Canvas>
  );
}

export default function App() {
  return (
    <Shell>
      <GlobalStyle />
      <MenuBar>{menus.map((m) => <MenuItem key={m}>{m}</MenuItem>)}</MenuBar>

      <ToolBar $height={45}>
        <Handle />
        <ToolButton aria-label="Kijelölés">{icons.cursor}</ToolButton>
        <Handle $before={25} />
        {tools.map((t, i) => {
          if (t === '|') return <Divider key={i} />;
          if (t === ':') return <Handle key={i} />;
          return <ToolButton key={i} aria-label={t.label} $active={t.active}>{icons[t.id]}</ToolButton>;
        })}
      </ToolBar>

      <ToolBar $height={39}>
        <Handle />
        <CurrentTool aria-label="Aktuális eszköz"><Small>{lineIcon}</Small></CurrentTool>
        <Divider />
        <ToolButton $height={36} $active aria-label="Szakasz"><Small>{lineIcon}</Small></ToolButton>
        <ToolButton $height={36} aria-label="Egyenes"><Small><path d="M11 26L33 11.500" stroke="#111" strokeWidth="1.200" /><path d="M7.300 28.700L12 22L15.500 27ZM36.700 9L32 15.500L28.500 10.500Z" /><D x={22} y={18.7} /></Small></ToolButton>
        <ToolButton $height={36} aria-label="Félegyenes"><Small><path d="M11.300 25.700L33 11.500" stroke="#111" strokeWidth="1.200" /><path d="M36.500 9L32 15.500L28.500 10.500Z" /><D x={11.3} y={25.7} /></Small></ToolButton>
        <Divider $after={4} />
        <ToolButton $height={36} aria-label="Sokszög lezárása"><Small faded><path d="M11.300 18.300L17.700 28.300L27.300 26.700L32.700 21L23.700 17.300L21.700 8.700" fill="none" stroke="#222" strokeWidth="1.200" /><path d="M11.300 18.300L21.700 8.700" stroke="#f00" strokeWidth="1.400" /><D x={11.3} y={18.3} /><D x={21.7} y={8.7} /></Small></ToolButton>
        <Divider $after={4} />
        <ToolButton $height={36} aria-label="Pont visszavonása"><Small faded>{openPolyline}<path d="M9.500 13.500L17 22.500" stroke="#f00" /><D x={9.5} y={13.5} /><D x={17} y={22.5} /><g transform="translate(10.500 0) scale(.67)"><TurnArrow /></g></Small></ToolButton>
        <ToolButton $height={36} aria-label="Pont ismétlése"><Small faded>{openPolyline}<path d="M9.500 13.500L17 22.500" stroke="#f00" /><D x={9.5} y={13.5} /><D x={17} y={22.5} /><g transform="translate(39 0) scale(-.67 .67)"><TurnArrow /></g></Small></ToolButton>
        <Divider $after={4} />
        <Field>
          <Check type="checkbox" id="length-on" />
          <FieldLabel htmlFor="length-on">Hosszúság:</FieldLabel>
          <NumberBox aria-label="Hosszúság" />
        </Field>
        <Divider />
        <Field>
          <Check type="checkbox" id="angle-on" />
          <FieldLabel htmlFor="angle-on">Szög:</FieldLabel>
          <NumberBox aria-label="Szög" />
        </Field>
        <Divider />
      </ToolBar>

      <Workspace>
        <SnapPanel>
          <DotRow $width={58} />
          <BackButton aria-label="Vissza"><svg width="8" height="8" aria-hidden="true"><path d="M0 4L8 0V8Z" /></svg></BackButton>
          {snapGroups.map((group, i) => (
            <SnapGroup key={i}>
              {group.map((s) => <SnapButton key={s.label} $pressed={s.pressed} aria-label={s.label}>{s.art}</SnapButton>)}
            </SnapGroup>
          ))}
        </SnapPanel>

        <Center>
          <DocTitle>
            <svg width="15" height="15" viewBox="0 0 15 15" aria-hidden="true"><circle cx="7" cy="6.500" r="5.200" fill="#f3f4f8" stroke="#334f94" strokeWidth="2" /><path d="M7 3V10M3.500 6.500H10.500" stroke="#bbb" /><path d="M6.500 5.500L8 5.500L14 11.500L12.500 13.500L7 7.500Z" fill="#f0a030" stroke="#a87838" strokeWidth=".7" /></svg>
            <DocName>* Cím nélkül 2</DocName>
          </DocTitle>
          <DrawArea>
            <TopRuler aria-hidden="true">
              {range(0, 20).map((n) => (
                <g key={n}><rect x={48 + n * STEP} y="16" width="1" height="7" fill="#888" /><text x={48 + n * STEP} y="9" textAnchor="middle">{n * 10}</text></g>
              ))}
              <path d="M154 13H166L160 19Z" fill="#000" />
            </TopRuler>
            <Ruler aria-hidden="true">
              {range(0, 11).map((n) => (
                <g key={n}><rect x="16" y={552 - n * STEP} width="7" height="1" fill="#888" /><text transform={`translate(9 ${552 - n * STEP}) rotate(-90)`} textAnchor="middle">{n * 10}</text></g>
              ))}
              <path d="M13 318V330L19 324Z" fill="#000" />
            </Ruler>
            <Drawing />
            <VerticalScroll><Thumb $size="60%" /></VerticalScroll>
            <span />
            <ScrollRow><HorizontalScroll><HorizontalThumb /></HorizontalScroll>10 &lt; 100</ScrollRow>
          </DrawArea>
          <History>
            <span><em>Parancs:</em> line</span>
            <HistoryScroll><Thumb $size="17px" /></HistoryScroll>
          </History>
          <CommandLine>
            <label htmlFor="command">Első pont:</label>
            <CommandInput id="command" />
            <CommandButton aria-label="Parancsablak"><svg width="14" height="10" aria-hidden="true"><rect x=".5" y=".5" width="13" height="9" fill="#fff" stroke="#555" /><path d="M0 0H14V3H0Z" /></svg></CommandButton>
          </CommandLine>
        </Center>

        <LayerDock>
          <DockTitle>
            <svg width="14" height="14" aria-hidden="true"><circle cx="7" cy="7" r="7" fill="#585858" /><path d="M4 4L10 10M10 4L4 10" stroke="#fff" strokeWidth="2" /></svg>
            <svg width="14" height="14" aria-hidden="true"><circle cx="7" cy="7" r="7" fill="#585858" /><path d="M5.500 6V4H11V8H9M3 6.500H8.500V10.500H3Z" fill="none" stroke="#fff" /></svg>
            <DockName>Réteglista</DockName>
          </DockTitle>
          <LayerActions>
            <LayerAction aria-label="Mind látható"><Eye /></LayerAction>
            <LayerAction aria-label="Mind rejtett"><Eye color="#999" hole="#eee" /></LayerAction>
            <LayerAction aria-label="Réteg hozzáadása"><svg width="12" height="12" aria-hidden="true"><path d="M4.500 .5H7.500V4.500H11.500V7.500H7.500V11.500H4.500V7.500H.5V4.500H4.500Z" fill="#f00" stroke="#a00" strokeWidth=".8" /></svg></LayerAction>
            <LayerAction aria-label="Réteg törlése"><svg width="12" height="4" aria-hidden="true"><rect x=".5" y=".5" width="11" height="3" fill="#f00" stroke="#a00" strokeWidth=".8" /></svg></LayerAction>
            <LayerAction aria-label="Réteg szerkesztése"><Pencil size={16} /></LayerAction>
          </LayerActions>
          <LayerTable>
            <tbody>
              {layers.map((l) => (
                <LayerRow key={l.name} $selected={l.selected}>
                  <LayerCell $width={27}><Swatch $color={l.color} $edge={l.edge} /></LayerCell>
                  <LayerCell>{l.name}</LayerCell>
                  <LayerCell $width={20}>{l.selected && <Pencil size={13} />}</LayerCell>
                  <LayerCell $width={25}><Eye color={l.selected ? '#34415c' : '#000'} hole={l.selected ? '#084adb' : '#fff'} /></LayerCell>
                  <LayerCell $width={14}><Lock light={l.selected} /></LayerCell>
                </LayerRow>
              ))}
            </tbody>
          </LayerTable>
        </LayerDock>

        <DockBar>
          <DotRow $width={26} />
          {docks.map((d, i) => (d
            ? <DockButton key={i} $active={d.active} aria-label={d.label}><Win>{d.art}</Win></DockButton>
            : <DockDivider key={i} />))}
        </DockBar>
      </Workspace>

      <StatusBar>
        <Coordinates><span>22.4,45.6</span><span>@2.4,-4.4</span></Coordinates>
        <Coordinates $ruled><span>50.8047&lt;64°</span><span>@5.012&lt;299°</span></Coordinates>
        <StatusCell>
          <Bullet />
          <MouseHints>
            <HintLeft>Első pont</HintLeft>
            <MouseCell><svg width="20" height="32" aria-hidden="true"><rect x="1" y="1" width="18" height="29" rx="8.500" fill="#fff" stroke="#555" /><path d="M1 14Q10 11 19 14M10 1V12" fill="none" stroke="#444" strokeWidth="1.500" /><rect x="8" y="3" width="4" height="8" rx="2" fill="#fff" stroke="#444" /></svg></MouseCell>
            <span>Törölje</span>
          </MouseHints>
        </StatusCell>
        <StatusCell><Bullet /><Selection>Nincs kiválasztott szervezet.</Selection><Bullet /></StatusCell>
      </StatusBar>
      <Defs />
    </Shell>
  );
}
